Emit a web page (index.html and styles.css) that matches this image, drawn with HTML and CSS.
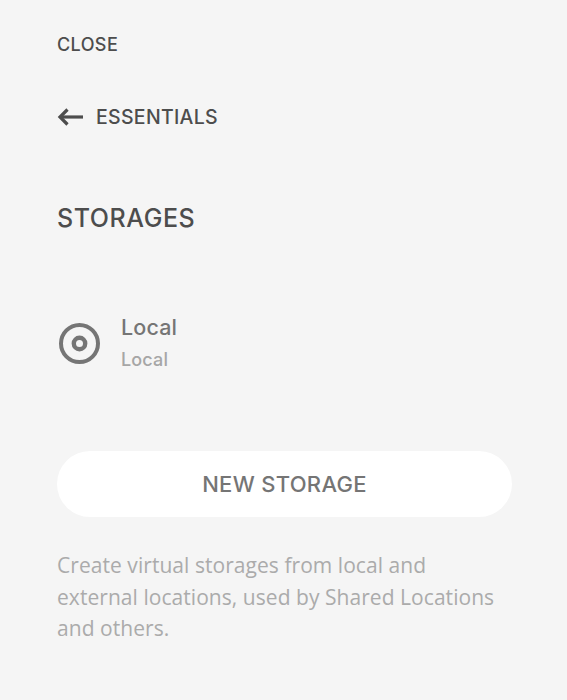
FILE: index.html
```html
<!DOCTYPE html>
<html lang="en">

<head>
    <meta charset="UTF-8">
    <meta name="viewport" content="width=device-width, initial-scale=1.0">
    <title>Storages</title>

    <link rel="stylesheet" href="styles.css">
</head>

<body>
    <div class="panel">
        <a class="close-link">CLOSE</a>

        <a class="back-link">
            <svg class="back-icon" viewBox="0 0 26 20" width="26" height="20" fill="none" stroke="#4d4d4d" stroke-width="3.2">
                <path d="M26 10H3" />
                <path d="M10.5 2.5L3 10L10.5 17.5" />
            </svg>
            <span>ESSENTIALS</span>
        </a>

        <h1 class="page-title">STORAGES</h1>

        <div class="storage-item">
            <svg class="storage-icon" viewBox="0 0 44 44" width="44" height="44" fill="none" stroke="#757575">
                <circle cx="22.5" cy="22.5" r="18.5" stroke-width="4" />
                <circle cx="22.5" cy="22.5" r="5.7" stroke-width="4.4" />
            </svg>
            <div class="storage-text">
                <div class="storage-name">Local</div>
                <div class="storage-type">Local</div>
            </div>
        </div>

        <button class="new-btn">NEW STORAGE</button>

        <p class="help-text">Create virtual storages from local and external locations, used by Shared Locations and others.</p>
    </div>
</body>

</html>
```

FILE: styles.css
```css
body {
    margin: 0;
    background: #f5f5f5;
    font-family: "Inter", "Liberation Sans", sans-serif;
}

.panel {
    display: flex;
    flex-direction: column;
    align-items: flex-start;
    padding: 35px 55px 0 57px;
}

.close-link {
    font-size: 18px;
    line-height: 20px;
    font-weight: 550;
    letter-spacing: 0.4px;
    color: #4d4d4d;
}

.back-link {
    display: flex;
    align-items: center;
    gap: 13px;
    margin-top: 52px;
    font-size: 19.5px;
    line-height: 20px;
    font-weight: 550;
    letter-spacing: 0.3px;
    color: #4d4d4d;
}

.page-title {
    margin: 76px 0 0;
    font-size: 25px;
    line-height: 30px;
    font-weight: 550;
    letter-spacing: 0.55px;
    color: #4d4d4d;
}

.storage-item {
    display: flex;
    align-items: center;
    gap: 20px;
    margin-top: 82px;
}

.storage-name {
    font-size: 21.5px;
    line-height: 24px;
    font-weight: 550;
    letter-spacing: 0.15px;
    color: #757575;
}

.storage-type {
    margin-top: 10px;
    font-size: 18px;
    line-height: 22px;
    font-weight: 550;
    letter-spacing: 0.15px;
    color: #a6a6a6;
}

.new-btn {
    width: 100%;
    height: 66px;
    margin-top: 80px;
    border: 0;
    border-radius: 33px;
    background: #fff;
    font-family: inherit;
    font-size: 22px;
    font-weight: 550;
    letter-spacing: 0.3px;
    color: #757575;
}

.help-text {
    margin: 33px 0 0;
    font-family: "Open Sans", sans-serif;
    font-size: 21px;
    line-height: 31.5px;
    letter-spacing: 0.05px;
    color: #ababab;
}
```
